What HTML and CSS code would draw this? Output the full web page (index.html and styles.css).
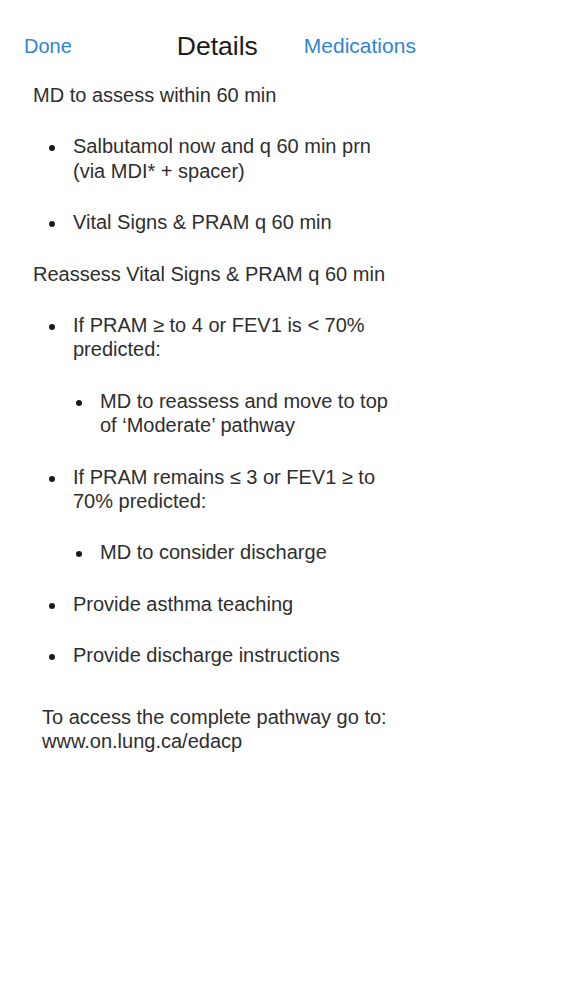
FILE: index.html
```html
<!DOCTYPE html>
<html>
<head>
<meta charset="utf-8">
<link rel="stylesheet" href="styles.css">
</head>
<body>
<header class="nav">
  <span class="nav-btn done">Done</span>
  <span class="nav-title">Details</span>
  <span class="nav-btn meds">Medications</span>
</header>
<main class="content">
  <p class="para">MD to assess within 60 min</p>
  <ul class="list">
    <li class="item"><div class="item-body">Salbutamol now and q 60 min prn<br>(via MDI* + spacer)</div></li>
    <li class="item"><div class="item-body">Vital Signs &amp; PRAM q 60 min</div></li>
  </ul>
  <p class="para">Reassess Vital Signs &amp; PRAM q 60 min</p>
  <ul class="list">
    <li class="item"><div class="item-body">If PRAM ≥ to 4 or FEV1 is &lt; 70%<br>predicted:
      <ul class="list sub">
        <li class="item"><div class="item-body">MD to reassess and move to top<br>of ‘Moderate’ pathway</div></li>
      </ul></div>
    </li>
    <li class="item"><div class="item-body">If PRAM remains ≤ 3 or FEV1 ≥ to<br>70% predicted:
      <ul class="list sub">
        <li class="item"><div class="item-body">MD to consider discharge</div></li>
      </ul></div>
    </li>
    <li class="item"><div class="item-body">Provide asthma teaching</div></li>
    <li class="item"><div class="item-body">Provide discharge instructions</div></li>
  </ul>
  <p class="para footer">To access the complete pathway go to:<br>www.on.lung.ca/edacp</p>
</main>
</body>
</html>
```
FILE: styles.css
```css
html, body {
  margin: 0;
  padding: 0;
  background: #ffffff;
}
body {
  font-family: "Liberation Sans", Arial, Helvetica, sans-serif;
  color: #2e2e2e;
  width: 563px;
}
.nav {
  display: flex;
  align-items: center;
  height: 32px;
  padding: 30px 0 0 24px;
}
.nav-btn {
  font-size: 20px;
  color: #3382d6;
  line-height: 32px;
}
.nav-title {
  font-size: 26.5px;
  color: #1c1c1c;
  line-height: 32px;
  margin-left: 105px;
}
.meds {
  margin-left: 46px;
  font-size: 21px;
}
.content {
  padding: 21px 0 0 33px;
  font-size: 20px;
  line-height: 24.5px;
}
.para {
  margin: 0 0 26.85px 0;
}
.list {
  list-style: none;
  margin: 0 0 26.85px 0;
  padding: 0 0 0 16px;
}
.list.sub {
  margin: 26.85px 0 0 0;
  padding-left: 3px;
}
.item {
  display: flex;
  align-items: flex-start;
  margin-bottom: 26.85px;
}
.item:last-child {
  margin-bottom: 0;
}
.item::before {
  content: "";
  flex: none;
  width: 6px;
  height: 6px;
  border-radius: 50%;
  background: #1a1a1a;
  margin-top: 11px;
  margin-right: 18px;
}
.footer {
  margin-top: 37px;
  padding-left: 9px;
}
```
